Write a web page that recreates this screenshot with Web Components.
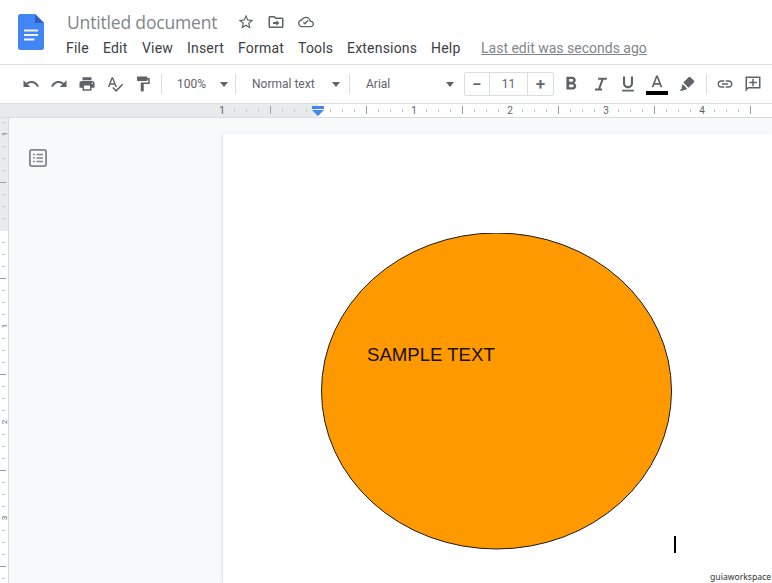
<!DOCTYPE html>
<html><head><meta charset="utf-8"><style>
html,body{margin:0;padding:0;width:772px;height:583px;overflow:hidden;background:#fff;font-family:Roboto,"Liberation Sans",sans-serif}
#app{display:flex;flex-direction:column;height:583px}
</style></head><body>
<div id="app">
<gd-header></gd-header>
<gd-toolbar></gd-toolbar>
<gd-ruler></gd-ruler>
<gd-workspace></gd-workspace>
</div>
<script>
const P={
undo:"M12.5 8c-2.65 0-5.05.99-6.9 2.6L2 7v9h9l-3.62-3.62c1.39-1.16 3.16-1.88 5.12-1.88 3.54 0 6.55 2.31 7.6 5.5l2.37-.78C21.08 11.03 17.15 8 12.5 8z",
redo:"M18.4 10.6C16.55 8.99 14.15 8 11.5 8c-4.65 0-8.58 3.03-9.96 7.22L3.9 16c1.05-3.19 4.05-5.5 7.6-5.5 1.95 0 3.73.72 5.12 1.88L13 16h9V7l-3.6 3.6z",
print:"M19 8H5c-1.66 0-3 1.34-3 3v6h4v4h12v-4h4v-6c0-1.66-1.34-3-3-3zm-3 11H8v-5h8v5zm3-7c-.55 0-1-.45-1-1s.45-1 1-1 1 .45 1 1-.45 1-1 1zm-1-9H6v4h12V3z",
spell:"M12.45 16h2.09L9.43 3H7.57L2.46 16h2.09l1.12-3h5.64l1.14 3zm-6.02-5L8.5 5.48 10.57 11H6.43zm15.16.59l-8.09 8.09L9.83 16l-1.41 1.41 5.09 5.09L23 13l-1.41-1.41z",
paint:"M18 4V3c0-.55-.45-1-1-1H5c-.55 0-1 .45-1 1v4c0 .55.45 1 1 1h12c.55 0 1-.45 1-1V6h1v4H9v11c0 .55.45 1 1 1h2c.55 0 1-.45 1-1v-9h8V4h-3z",
bold:"M15.6 10.79c.97-.67 1.65-1.77 1.65-2.79 0-2.26-1.75-4-4-4H7v14h7.04c2.09 0 3.71-1.7 3.71-3.79 0-1.52-.86-2.82-2.15-3.42zM10 6.5h3c.83 0 1.5.67 1.5 1.5s-.67 1.5-1.5 1.5h-3v-3zm3.5 9H10v-3h3.5c.83 0 1.5.67 1.5 1.5s-.67 1.5-1.5 1.5z",
italic:"M9 3.500v2.500h4.100L9 17H5v2.500h9V17h-2.300L15.800 6H20V3.500z",
underline:"M12 17c3.31 0 6-2.69 6-6V3h-2.5v8c0 1.93-1.57 3.5-3.5 3.5S8.5 12.93 8.5 11V3H6v8c0 3.31 2.69 6 6 6zm-7 2v2h14v-2H5z",
color:"M11 3L5.5 17h2.25l1.12-3h6.25l1.12 3h2.25L13 3h-2zm-1.38 9L12 5.67 14.38 12H9.62z",
marker:"M16.2 2.6l5.2 5.2c.5.5.5 1.2 0 1.7l-7.4 7.4-6.9-6.9 7.4-7.4c.5-.5 1.2-.5 1.7 0zM6.1 11.9l6 6-2.2 2.1-2-.4-1.4 1.4H2l3.4-3.4-.4-2 1.1-3.7z",
link:"M3.9 12c0-1.71 1.39-3.1 3.1-3.1h4V7H7c-2.76 0-5 2.24-5 5s2.24 5 5 5h4v-1.9H7c-1.71 0-3.1-1.39-3.1-3.1zM8 13h8v-2H8v2zm9-6h-4v1.9h4c1.71 0 3.1 1.39 3.1 3.1s-1.39 3.1-3.1 3.1h-4V17h4c2.76 0 5-2.24 5-5s-2.24-5-5-5z",
comment:"M2 2h20v16H6l-4 4V2zm2 2v13.17L5.17 16H20V4H4zM11 5h2v4h4v2h-4v4h-2v-4H7V9h4V5z",
star:"M22 9.24l-7.19-.62L12 2 9.19 8.63 2 9.24l5.46 4.73L5.82 21 12 17.27 18.18 21l-1.63-7.03L22 9.24zM12 15.4l-3.76 2.27 1-4.28-3.32-2.88 4.38-.38L12 6.1l1.71 4.04 4.38.38-3.32 2.88 1 4.28L12 15.4z",
folder:"M20 6h-8l-2-2H4c-1.1 0-2 .9-2 2v12c0 1.1.9 2 2 2h16c1.1 0 2-.9 2-2V8c0-1.1-.9-2-2-2zm0 12H4V6h5.17l2 2H20v10zM12.5 9.5v2.6H8v2.4h4.5v2.6l4-3.8z",
cloud:"M19.35 10.04C18.67 6.59 15.64 4 12 4 9.11 4 6.6 5.64 5.35 8.04 2.34 8.36 0 10.91 0 14c0 3.31 2.69 6 6 6h13c2.76 0 5-2.24 5-5 0-2.64-2.05-4.78-4.65-4.96zM19 18H6c-2.21 0-4-1.79-4-4 0-2.05 1.53-3.76 3.56-3.97l1.07-.11.5-.95C8.08 7.14 9.94 6 12 6c2.62 0 4.88 1.86 5.39 4.43l.3 1.5 1.53.11c1.56.1 2.78 1.41 2.78 2.96 0 1.65-1.35 3-3 3zM10.3 16l-3-3 1.4-1.4 1.6 1.6 4.4-4.4 1.4 1.4z"
};
function def(name,css,html,init){
  customElements.define(name,class extends HTMLElement{
    constructor(){super();const r=this.attachShadow({mode:"open"});
      r.innerHTML=`<style>${css}</style>`+(typeof html==="function"?html(this):html);
      if(init)init(r,this);}
  });
}
const svg=(d,s,c)=>`<svg width="${s}" height="${s}" viewBox="0 0 24 24" fill="${c||'currentColor'}" fill-rule="evenodd"><path d="${d}"/></svg>`;

def("gd-icon",":host{display:flex;align-items:center;justify-content:center;width:28px;height:28px;color:#5f6368;flex:none}svg{display:block}",
  el=>svg(P[el.getAttribute("name")],+(el.getAttribute("size")||18)));

def("gd-sep",":host{display:block;width:1px;height:20px;background:#dadce0;flex:none}","");

def("gd-select",`:host{display:flex;align-items:center;height:28px;flex:none;font:12px/26px Roboto,sans-serif;color:#5f6368;box-sizing:border-box}
 .l{flex:1;white-space:nowrap}.c{width:0;height:0;border:4.5px solid transparent;border-top:5px solid #5f6368;border-bottom:0;flex:none}`,
  el=>`<span class="l"><slot></slot></span><span class="c"></span>`);

def("gd-header",`:host{display:flex;height:65px;box-sizing:border-box;padding:14px 0 0 18px;background:#fff;border-bottom:1px solid #dadce0;flex:none}
 .logo{flex:none;width:26px;height:36px;display:block}
 .main{margin-left:22px;display:flex;flex-direction:column}
 .top{display:flex;align-items:center;height:16px;margin-left:1px}
 .title{font:17.5px/16px "Open Sans",sans-serif;letter-spacing:-.17px;color:#80868b;white-space:nowrap;width:164px}
 .ic{width:30px;display:flex;justify-content:center;color:#5f6368}
 .menu{display:flex;align-items:center;margin-top:10px;font:14px/16px Roboto,sans-serif;letter-spacing:.2px;color:#3c4043;white-space:nowrap}
 .menu span{display:block}
 .last{color:#80868b;text-decoration:underline;margin-left:20px;letter-spacing:0}`,
 `<svg class="logo" viewBox="0 0 26 36"><path d="M2.5 0H17l9 9v24.5a2.5 2.5 0 0 1-2.5 2.5h-21A2.5 2.5 0 0 1 0 33.500v-31A2.500 2.500 0 0 1 2.500 0z" fill="#4285f4"/><path d="M17 0l9 9h-9z" fill="#2f5fc4"/><path d="M6 15.500h14v2H6zM6 20h14v2H6zM6 24.500h10.500v2H6z" fill="#f1f3f4"/></svg>
 <div class="main"><div class="top"><span class="title">Untitled document</span>
 <span class="ic">${svg(P.star,18)}</span><span class="ic">${svg(P.folder,18)}</span><span class="ic">${svg(P.cloud,16)}</span></div>
 <div class="menu"><span style="width:37px">File</span><span style="width:39px">Edit</span><span style="width:45px">View</span><span style="width:51px">Insert</span><span style="width:60px">Format</span><span style="width:49px">Tools</span><span style="width:84px">Extensions</span><span style="width:30px">Help</span><span class="last">Last edit was seconds ago</span></div></div>`);

def("gd-toolbar",`:host{display:flex;align-items:center;height:39px;box-sizing:border-box;padding-left:17px;background:#fff;border-bottom:1px solid #dadce0;flex:none;color:#5f6368}
 .stepper{display:flex;align-items:center;width:90px;height:24px;box-sizing:border-box;border:1px solid #dadce0;border-radius:2px;margin-left:10px;flex:none;font:12px Roboto,sans-serif;color:#5f6368}
 .stepper b{display:flex;align-items:center;justify-content:center;height:100%;font:500 17px/1 Roboto,sans-serif}
 .stepper .m{width:24px;border-right:1px solid #dadce0}
 .stepper .v{flex:1;text-align:center}
 .stepper .p{width:25px;border-left:1px solid #dadce0}
 .cbox{position:relative;margin-left:1px;flex:none}
 .bar{position:absolute;left:3px;right:3px;bottom:2px;height:4px;background:#000}
 .cbox gd-icon{margin-top:-2px}`,
 `<gd-icon name="undo"></gd-icon><gd-icon name="redo"></gd-icon><gd-icon name="print"></gd-icon><gd-icon name="spell"></gd-icon><gd-icon name="paint"></gd-icon>
 <gd-sep style="margin-left:4px"></gd-sep>
 <gd-select style="width:51px;margin-left:15px">100%</gd-select>
 <gd-sep style="margin-left:7px"></gd-sep>
 <gd-select style="width:88px;margin-left:16px">Normal text</gd-select>
 <gd-sep style="margin-left:9px"></gd-sep>
 <gd-select style="width:88px;margin-left:16px">Arial</gd-select>
 <div class="stepper"><b class="m">−</b><span class="v">11</span><b class="p">+</b></div>
 <gd-icon name="bold" style="margin-left:3px" size="22"></gd-icon><gd-icon name="italic" style="margin-left:1px" size="19"></gd-icon><gd-icon name="underline" size="20"></gd-icon>
 <span class="cbox"><gd-icon name="color" size="20"></gd-icon><span class="bar"></span></span>
 <gd-icon name="marker" style="margin-left:2px" size="18"></gd-icon>
 <gd-sep style="margin-left:5px"></gd-sep>
 <gd-icon name="link" style="margin-left:4px"></gd-icon><gd-icon name="comment"></gd-icon>`);

def("gd-ruler",`:host{display:block;height:14px;flex:none;background:linear-gradient(to right,#e8eaed 0,#e8eaed 318px,#fff 318px);border-bottom:1px solid #dadce0;box-sizing:border-box}
 svg{display:block}text{font:10px Roboto,sans-serif;fill:#5f6368}`,
 ()=>{let s='';const base=318;
  for(let k=-8;k<=36;k++){const x=base+k*12;if(x<218||x>772)continue;
    if(k%8===0)continue;
    if(k%4===0)s+=`<rect x="${x}" y="2" width="1" height="8" fill="#9aa0a6"/>`;
    else s+=`<rect x="${x}" y="5" width="1" height="3" fill="#c4c7cb"/>`;}
  for(const [x,t] of [[222,1],[414,1],[510,2],[606,3],[702,4]])s+=`<text x="${x}" y="10" text-anchor="middle">${t}</text>`;
  s+=`<path d="M312 2h12v3h-12z M312 6h12l-6 6z" fill="#4285f4"/>`;
  return `<svg width="772" height="13">${s}</svg>`;});

def("gd-vruler",`:host{display:block;width:9px;flex:none;background:linear-gradient(to bottom,#e8eaed 0,#e8eaed 113px,#fff 113px);border-right:1px solid #dadce0;box-sizing:border-box;overflow:hidden;height:100%}
 svg{display:block}text{font:8px Roboto,sans-serif;fill:#5f6368}`,
 ()=>{let s='';const base=112;
  for(let k=-9;k<=30;k++){const y=base+k*12;if(y<0)continue;if(k%8===0)continue;
    s+= k%4===0?`<rect x="0" y="${y}" width="6" height="1" fill="#9aa0a6"/>`:`<rect x="2" y="${y}" width="3" height="1" fill="#c4c7cb"/>`;}
  for(const [y,t] of [[16,1],[208,1],[304,2],[400,3]])s+=`<text transform="translate(6.500 ${y}) rotate(-90)" text-anchor="middle">${t}</text>`;
  return `<svg width="8" height="465">${s}</svg>`;});

def("gd-shape",`:host{display:block;position:relative;width:352px;height:318px;flex:none}
 svg{display:block}
 .t{position:absolute;left:46px;top:110px;font:18.6px/24px "Liberation Sans",Arial,sans-serif;color:#1a0f00;white-space:nowrap}`,
 `<svg width="352" height="318"><ellipse cx="175.500" cy="158" rx="175" ry="158" fill="#ff9900" stroke="#1a1a1a" stroke-width="1"/></svg><span class="t"><slot></slot></span>`);

def("gd-page",`:host{display:block;position:relative;flex:1;background:#fff;margin-top:16px;padding:99px 0 0 98px;box-sizing:border-box;border-left:1px solid #e3e5e8;min-width:0;box-shadow:-1px 0 3px rgba(60,64,67,.06)}
 .cursor{position:absolute;left:451px;top:402px;width:2px;height:17px;background:#000}
 .wm{position:absolute;right:1px;bottom:0;font:8.6px/11px "Noto Sans",sans-serif;color:#333}`,
 `<slot></slot><span class="cursor"></span><span class="wm">guiaworkspace</span>`);

def("gd-workspace",`:host{display:flex;flex:1;min-height:0;background:#f8f9fa;overflow:hidden}
 .side{width:213px;flex:none;padding:31px 0 0 20px;box-sizing:border-box}
 svg{display:block}`,
 `<gd-vruler></gd-vruler><div class="side"><svg width="18" height="18" viewBox="0 0 18 18" fill="none" stroke="#80868b" stroke-width="1.800"><rect x=".9" y=".9" width="16.200" height="16.200" rx="2"/><path d="M4 5.500h1.800M7.500 5.500h6.500M4 9h1.800M7.500 9h6.500M4 12.500h1.800M7.500 12.500h6.500" stroke-width="1.500"/></svg></div>
 <gd-page><gd-shape>SAMPLE TEXT</gd-shape></gd-page>`);
</script>
</body></html>
